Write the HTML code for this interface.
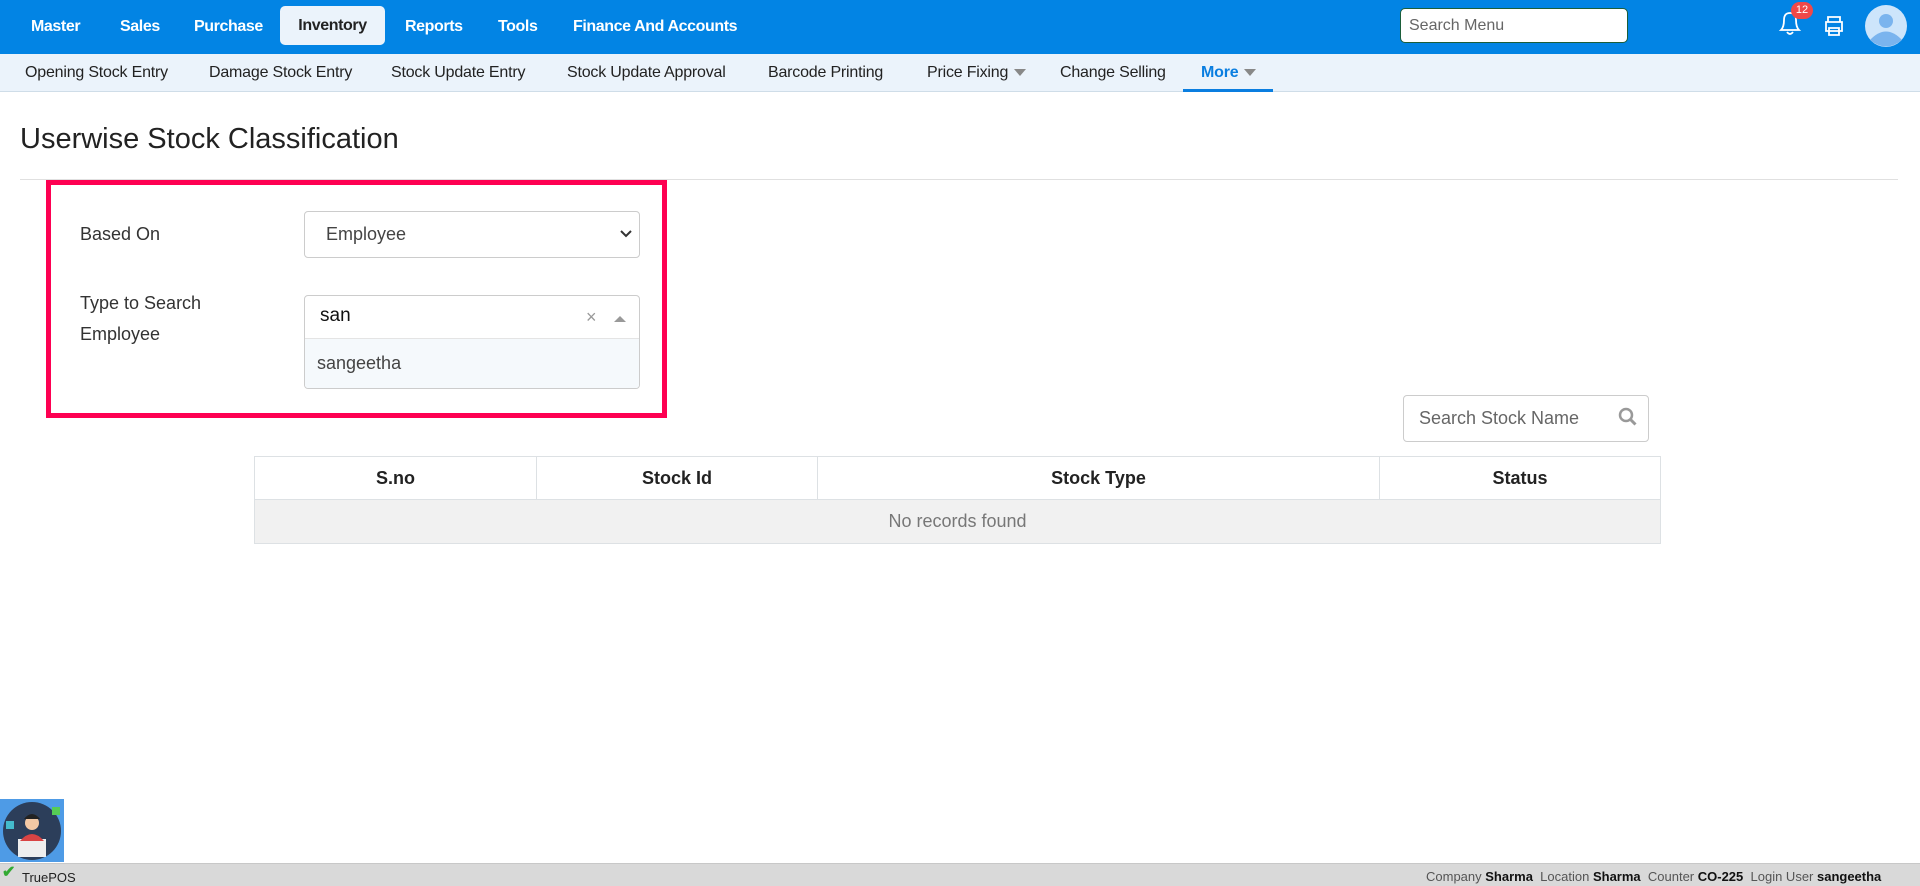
<!DOCTYPE html>
<html><head><meta charset="utf-8"><style>
*{box-sizing:border-box;margin:0;padding:0}
body{width:1920px;height:886px;position:relative;overflow:hidden;background:#fff;font-family:"Liberation Sans",sans-serif;color:#222}
.abs{position:absolute}
.top{left:0;top:0;width:1920px;height:54px;background:#0284e4}
.nav{top:0;height:54px;line-height:54px;color:#fff;font-weight:bold;font-size:16px;letter-spacing:-0.4px}
.act{left:280px;top:6px;width:105px;height:39px;background:#ebf3fb;border-radius:5px;color:#222;text-align:center;line-height:39px;font-weight:bold;font-size:16px;letter-spacing:-0.4px}
.sub{left:0;top:54px;width:1920px;height:38px;background:#ebf3fb;border-bottom:1px solid #cfdde8}
.si{top:54px;height:38px;line-height:38px;font-size:16px;color:#222;letter-spacing:-0.2px}
.tri{display:inline-block;width:0;height:0;border-left:6px solid transparent;border-right:6px solid transparent;border-top:7px solid #888;vertical-align:middle;margin-left:6px}
.lbl{font-size:18px;color:#333}
th{font-weight:bold;font-size:18px;color:#222;border:1px solid #dde1e4;height:43px}
</style></head><body>
<div class="abs top"></div>
<div class="abs nav" style="left:31px">Master</div>
<div class="abs nav" style="left:120px">Sales</div>
<div class="abs nav" style="left:194px">Purchase</div>
<div class="abs act">Inventory</div>
<div class="abs nav" style="left:405px">Reports</div>
<div class="abs nav" style="left:498px">Tools</div>
<div class="abs nav" style="left:573px">Finance And Accounts</div>
<div class="abs" style="left:1400px;top:8px;width:228px;height:35px;background:#fff;border:1px solid #1b5e3a;border-radius:5px;font-size:16px;color:#666;line-height:33px;padding-left:8px">Search Menu</div>
<svg class="abs" style="left:1776px;top:8px" width="28" height="30" viewBox="0 0 28 30"><path d="M5 22 Q8 19 8 12 Q8 5 14 5 Q20 5 20 12 Q20 19 23 22 Z M11 24 Q14 28 17 24" fill="none" stroke="#fff" stroke-width="1.8"/></svg>
<div class="abs" style="left:1791px;top:2px;width:22px;height:17px;border-radius:9px;background:#f04848;color:#fff;font-size:11px;text-align:center;line-height:17px">12</div>
<svg class="abs" style="left:1822px;top:14px" width="24" height="24" viewBox="0 0 24 24"><path d="M6 8V3h12v5M4 8h16v9H4zM7 14h10v7H7z" fill="none" stroke="#fff" stroke-width="1.8"/></svg>
<svg class="abs" style="left:1865px;top:5px" width="42" height="42" viewBox="0 0 42 42"><circle cx="21" cy="21" r="21" fill="#cde5fb"/><circle cx="21" cy="16" r="7" fill="#7ab4ee"/><path d="M5 35 Q21 18 37 35 Q21 48 5 35Z" fill="#7ab4ee"/></svg>

<div class="abs sub"></div>
<div class="abs si" style="left:25px">Opening Stock Entry</div>
<div class="abs si" style="left:209px">Damage Stock Entry</div>
<div class="abs si" style="left:391px">Stock Update Entry</div>
<div class="abs si" style="left:567px">Stock Update Approval</div>
<div class="abs si" style="left:768px">Barcode Printing</div>
<div class="abs si" style="left:927px">Price Fixing<span class="tri"></span></div>
<div class="abs si" style="left:1060px">Change Selling</div>
<div class="abs si" style="left:1201px;color:#0a7ee0;font-weight:bold">More<span class="tri"></span></div>
<div class="abs" style="left:1183px;top:89px;width:90px;height:3px;background:#0a7ee0"></div>

<div class="abs" style="left:20px;top:123px;font-size:29px;color:#222">Userwise Stock Classification</div>
<div class="abs" style="left:20px;top:179px;width:1878px;height:1px;background:#e0e0e0"></div>

<div class="abs" style="left:46px;top:180px;width:621px;height:238px;border:5px solid #fe0052"></div>
<div class="abs lbl" style="left:80px;top:224px">Based On</div>
<div class="abs" style="left:304px;top:211px;width:336px;height:47px;border:1px solid #ccc;border-radius:4px;font-size:18px;color:#444;line-height:45px;padding-left:21px">Employee</div>
<svg class="abs" style="left:620px;top:229px" width="12" height="10" viewBox="0 0 12 10"><path d="M1 2l5 5 5-5" fill="none" stroke="#333" stroke-width="2"/></svg>
<div class="abs lbl" style="left:80px;top:288px;line-height:31px">Type to Search<br>Employee</div>
<div class="abs" style="left:304px;top:295px;width:336px;height:94px;border:1px solid #ccc;border-radius:4px;overflow:hidden">
<div style="height:43px;border-bottom:1px solid #e4e4e4;font-size:19px;color:#111;line-height:40px;padding-left:15px">san</div>
<div style="height:50px;background:#f5f9fc;font-size:18px;color:#444;line-height:48px;padding-left:12px">sangeetha</div>
</div>
<div class="abs" style="left:586px;top:307px;font-size:18px;color:#999">×</div>
<div class="abs" style="left:614px;top:316px;width:0;height:0;border-left:6px solid transparent;border-right:6px solid transparent;border-bottom:6px solid #999"></div>

<div class="abs" style="left:1403px;top:395px;width:246px;height:47px;border:1px solid #ccc;border-radius:4px;font-size:18px;color:#666;line-height:45px;padding-left:15px">Search Stock Name</div>
<svg class="abs" style="left:1618px;top:407px" width="20" height="20" viewBox="0 0 20 20"><circle cx="8" cy="8" r="6" fill="none" stroke="#999" stroke-width="2.5"/><path d="M12.5 12.5l5 5" stroke="#999" stroke-width="3"/></svg>

<table class="abs" style="left:254px;top:456px;width:1407px;border-collapse:collapse">
<tr><th style="width:282px">S.no</th><th style="width:281px">Stock Id</th><th style="width:562px">Stock Type</th><th>Status</th></tr>
<tr><td colspan="4" style="height:44px;background:#f1f1f1;border:1px solid #dde1e4;text-align:center;font-size:18px;color:#777">No records found</td></tr>
</table>

<svg class="abs" style="left:0;top:799px" width="64" height="63" viewBox="0 0 64 63"><rect width="64" height="63" fill="#4e9be6"/><circle cx="32" cy="32" r="29" fill="#2c3e5a"/><rect x="18" y="40" width="28" height="18" fill="#eee"/><circle cx="32" cy="24" r="7" fill="#f3c9a5"/><path d="M24 20q8-10 16 0" fill="#222"/><path d="M20 42q12-14 24 0" fill="#d94444"/><rect x="52" y="8" width="8" height="8" fill="#5c5"/><rect x="6" y="22" width="8" height="8" fill="#4bc"/></svg>
<div class="abs" style="left:0;top:863px;width:1920px;height:23px;background:#d9d9d9;border-top:1px solid #c8c8c8"></div>
<div class="abs" style="left:2px;top:862px;color:#3a3;font-size:16px;font-weight:bold">✔</div>
<div class="abs" style="left:22px;top:870px;font-size:13px;color:#222">TruePOS</div>
<div class="abs" style="left:1426px;top:869px;font-size:13px;color:#555;white-space:nowrap">Company <b style="color:#111">Sharma</b>&nbsp; Location <b style="color:#111">Sharma</b>&nbsp; Counter <b style="color:#111">CO-225</b>&nbsp; Login User <b style="color:#111">sangeetha</b></div>
</body></html>
